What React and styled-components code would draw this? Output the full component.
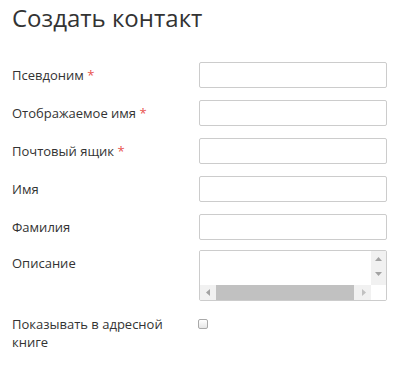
import React from 'react';
import styled, { createGlobalStyle } from 'styled-components';

const GlobalStyle = createGlobalStyle`
  body {
    margin: 0;
    background: #fff;
    font-family: "Open Sans", "Liberation Sans", sans-serif;
    color: #333;
  }
`;

const Page = styled.div`
  padding: 0 12px;
  width: 375px;
`;

const Title = styled.h2`
  margin: 2px 0 28px;
  font-size: 24px;
  line-height: 32px;
  font-weight: 400;
  color: #333;
`;

const Form = styled.form`
  display: flex;
  flex-direction: column;
`;

const Row = styled.div`
  display: grid;
  grid-template-columns: 187px 188px;
  margin-bottom: ${p => p.$gap ?? 12}px;
`;

const Label = styled.label`
  font-size: 13px;
  line-height: 18px;
  padding-top: 4px;
  padding-right: 20px;
  color: #333;
`;

const Required = styled.span`
  color: #e8534e;
`;

const Input = styled.input`
  box-sizing: border-box;
  width: 188px;
  height: 26px;
  border: 1px solid #ccc;
  border-radius: 2px;
  padding: 3px 6px;
  font: inherit;
  font-size: 13px;
  outline: none;
`;

const TextBox = styled.div`
  box-sizing: border-box;
  width: 188px;
  height: 51px;
  border: 1px solid #ccc;
  border-radius: 2px;
  display: grid;
  grid-template-columns: 1fr 15px;
  grid-template-rows: 1fr 15px;
  overflow: hidden;
`;

const TextArea = styled.textarea`
  border: none;
  padding: 2px 4px;
  margin: 0;
  resize: none;
  outline: none;
  overflow: hidden;
  font: inherit;
  font-size: 13px;
  min-width: 0;
`;

const VTrack = styled.div`
  background: #f1f1f1;
  display: flex;
  flex-direction: column;
`;

const HTrack = styled.div`
  background: #f1f1f1;
  display: flex;
  align-items: stretch;
`;

const Arrow = styled.div`
  width: 15px;
  height: 15px;
  flex: none;
  display: flex;
  align-items: center;
  justify-content: center;
`;

const Thumb = styled.div`
  flex: 1;
  background: #c1c1c1;
  margin: 0 2px 0 1px;
`;

const Corner = styled.div`
  background: #fff;
`;

const Check = styled.input`
  appearance: none;
  box-sizing: border-box;
  width: 10px;
  height: 10px;
  margin: 8px 0 0 -1px;
  border: 1px solid #a9a9a9;
  border-radius: 2px;
  background: linear-gradient(#fff, #e6e6e6);
`;

const tri = {
  up: '0,4 3.5,0 7,4',
  down: '0,0 7,0 3.5,4',
  left: '4,0 4,7 0,3.5',
  right: '0,0 0,7 4,3.5',
};

function ArrowIcon({ dir, color = '#a3a3a3' }) {
  const vertical = dir === 'up' || dir === 'down';
  return (
    <svg width={vertical ? 7 : 4} height={vertical ? 4 : 7}>
      <polygon points={tri[dir]} fill={color} />
    </svg>
  );
}

const fields = [
  { label: 'Псевдоним', required: true },
  { label: 'Отображаемое имя', required: true },
  { label: 'Почтовый ящик', required: true },
  { label: 'Имя' },
  { label: 'Фамилия', gap: 10 },
];

export default function App() {
  return (
    <Page>
      <GlobalStyle />
      <Title>Создать контакт</Title>
      <Form>
        {fields.map((f, i) => (
          <Row key={i} $gap={f.gap}>
            <Label>
              {f.label}
              {f.required && <Required> *</Required>}
            </Label>
            <Input type="text" />
          </Row>
        ))}
        <Row $gap={10}>
          <Label>Описание</Label>
          <TextBox>
            <TextArea />
            <VTrack>
              <Arrow><ArrowIcon dir="up" /></Arrow>
              <Arrow><ArrowIcon dir="down" /></Arrow>
            </VTrack>
            <HTrack>
              <Arrow><ArrowIcon dir="left" /></Arrow>
              <Thumb />
              <Arrow><ArrowIcon dir="right" color="#c1c1c1" /></Arrow>
            </HTrack>
            <Corner />
          </TextBox>
        </Row>
        <Row>
          <Label>Показывать в адресной книге</Label>
          <div>
            <Check type="checkbox" />
          </div>
        </Row>
      </Form>
    </Page>
  );
}
